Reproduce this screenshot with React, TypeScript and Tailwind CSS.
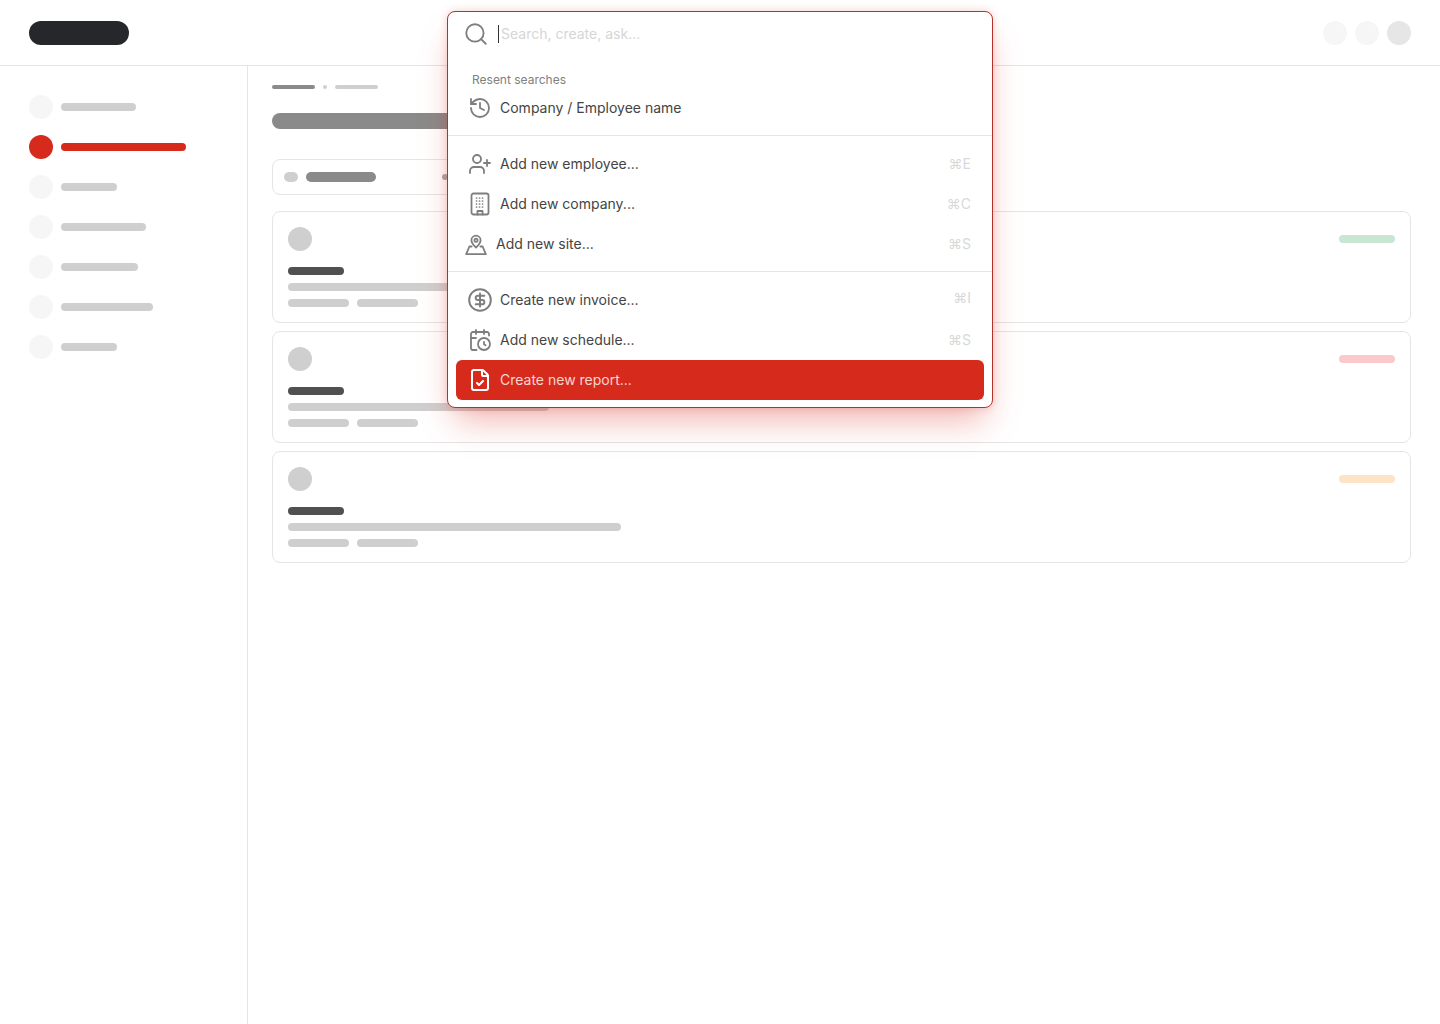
import {
  CalendarClock,
  CircleDollarSign,
  FileCheck,
  History,
  Search,
  UserPlus,
} from "lucide-react";
import type { ReactNode } from "react";

const navWidths = ["w-[75px]", "w-[125px]", "w-[56px]", "w-[85px]", "w-[77px]", "w-[92px]", "w-[56px]"];

function SiteIcon() {
  return (
    <svg viewBox="0 0 24 24" fill="none" stroke="currentColor" strokeWidth="1.8" strokeLinecap="round" strokeLinejoin="round" className="w-6 h-6">
      <path d="M12 15.5c-2.6-2.4-4.6-4.6-4.6-7.2a4.6 4.6 0 0 1 9.2 0c0 2.6-2 4.8-4.6 7.2Z" />
      <circle cx="12" cy="8.2" r="1.6" />
      <path d="M7.6 14.5H5.4L2.2 22.2h19.6l-3.2-7.7h-2.2" />
    </svg>
  );
}

function BuildingIcon() {
  return (
    <svg viewBox="0 0 24 24" fill="none" stroke="currentColor" strokeWidth="1.8" strokeLinecap="round" strokeLinejoin="round" className="w-6 h-6">
      <rect x="3.5" y="1.5" width="17" height="21" rx="2" />
      <path d="M9.5 22.5v-3.5h5v3.5" />
      <path strokeWidth="1.7" strokeDasharray="0.1 2.9" d="M8.5 6h7.1M8.5 9h7.1M8.5 12h7.1M8.5 15h7.1" />
    </svg>
  );
}

function SearchCard({ line, badge }: { line: string; badge: string }) {
  return (
    <div className="relative h-[112px] rounded-lg border border-[#e5e5e5] p-[15px]">
      <div className="w-6 h-6 rounded-full bg-[#cfcfcf]" />
      <div className="mt-4 w-14 h-2 rounded-full bg-[#505050]" />
      <div className={`mt-2 h-2 rounded-full bg-[#cfcfcf] ${line}`} />
      <div className="mt-2 flex gap-2">
        <div className="w-[61px] h-2 rounded-full bg-[#cfcfcf]" />
        <div className="w-[61px] h-2 rounded-full bg-[#cfcfcf]" />
      </div>
      <div className={`absolute right-[15px] top-[23px] w-14 h-2 rounded-full ${badge}`} />
    </div>
  );
}

function MenuRow({ icon, label, keys, keysClass, active, shift }: { icon: ReactNode; label: string; keys?: string; keysClass?: string; active?: boolean; shift?: boolean }) {
  return (
    <div className={`h-10 mx-2 rounded-md flex items-center ${active ? "bg-[#d62a1c] text-[#fbd5d0]" : "text-[#444444]"}`}>
      <div className={`flex items-center justify-center w-6 h-6 ${shift ? "ml-[8px]" : "ml-3"} ${active ? "text-white" : "text-[#7e7e7e]"}`}>
        {icon}
      </div>
      <span className="ml-2 text-sm">{label}</span>
      {keys && <span className={`ml-auto mr-[13px] text-sm text-[#d8d8d8] ${keysClass ?? ""}`}>{keys}</span>}
    </div>
  );
}

export default function App() {
  return (
    <div className="relative min-h-screen bg-white font-['Inter',sans-serif]">
      <header className="h-[66px] border-b border-[#e5e5e5] flex items-center justify-between pl-[29px] pr-[29px]">
        <div className="w-[100px] h-6 rounded-full bg-[#26272a]" />
        <div className="flex gap-2">
          <div className="w-6 h-6 rounded-full bg-[#f6f6f6]" />
          <div className="w-6 h-6 rounded-full bg-[#f6f6f6]" />
          <div className="w-6 h-6 rounded-full bg-[#e6e6e6]" />
        </div>
      </header>

      <div className="flex h-[958px]">
        <aside className="w-[248px] shrink-0 border-r border-[#e5e5e5] pt-[29px] pl-[29px] flex flex-col gap-4">
          {navWidths.map((w, i) => (
            <div key={i} className="flex items-center gap-2">
              <div className={`w-6 h-6 rounded-full ${i === 1 ? "bg-[#d62a1c]" : "bg-[#f6f6f6]"}`} />
              <div className={`h-2 rounded-full ${w} ${i === 1 ? "bg-[#d62a1c]" : "bg-[#cfcfcf]"}`} />
            </div>
          ))}
        </aside>

        <main className="flex-1 pl-6 pr-[29px] pt-[19px]">
          <div className="flex items-center gap-2">
            <div className="w-[43px] h-1 rounded-full bg-[#8a8a8a]" />
            <div className="w-1 h-1 rounded-full bg-[#cfcfcf]" />
            <div className="w-[43px] h-1 rounded-full bg-[#cfcfcf]" />
          </div>
          <div className="mt-6 w-[300px] h-4 rounded-full bg-[#8a8a8a]" />
          <div className="mt-[30px] w-[300px] h-9 rounded-lg border border-[#e5e5e5] flex items-center pl-[11px]">
            <div className="w-[14px] h-[10px] rounded-full bg-[#cfcfcf]" />
            <div className="ml-2 w-[70px] h-[10px] rounded-full bg-[#8a8a8a]" />
            <div className="ml-[66px] w-[6px] h-[6px] rounded-full bg-[#aaaaaa]" />
          </div>
          <div className="mt-4 flex flex-col gap-2">
            <SearchCard line="w-[333px]" badge="bg-[#c8e6d2]" />
            <SearchCard line="w-[261px]" badge="bg-[#fbc9c9]" />
            <SearchCard line="w-[333px]" badge="bg-[#fde3c8]" />
          </div>
        </main>
      </div>

      {/* command palette */}
      <div className="absolute left-[447px] top-[11px] w-[546px] h-[397px] rounded-lg border border-[#b5322a] bg-white shadow-[0_20px_32px_-8px_rgba(214,42,28,0.35),0_0_8px_rgba(214,42,28,0.2)]">
        <div className="h-[44px] flex items-center pl-[15px]">
          <Search className="w-[26px] h-[26px] text-[#7e7e7e]" strokeWidth={1.7} />
          <div className="ml-[9px] w-px h-[18px] bg-[#333333]" />
          <span className="ml-[2px] text-sm text-[#d6d6d6]">Search, create, ask...</span>
        </div>
        <div className="mt-4 pl-6 text-xs leading-4 text-[#808080]">Resent searches</div>
        <div className="h-10 flex items-center pl-5 text-[#444444]">
          <History className="w-6 h-6 text-[#7e7e7e]" strokeWidth={1.8} />
          <span className="ml-2 text-sm">Company / Employee name</span>
        </div>
        <div className="mt-[7px] h-px bg-[#e5e5e5]" />
        <div className="pt-2">
          <MenuRow icon={<UserPlus className="w-6 h-6" strokeWidth={1.8} />} label="Add new employee..." keys="⌘E" />
          <MenuRow icon={<BuildingIcon />} label="Add new company..." keys="⌘C" />
          <MenuRow icon={<SiteIcon />} label="Add new site..." keys="⌘S" shift />
        </div>
        <div className="mt-[7px] h-px bg-[#e5e5e5]" />
        <div className="pt-2">
          <MenuRow icon={<CircleDollarSign className="w-[26px] h-[26px] shrink-0" strokeWidth={1.8} />} label="Create new invoice..." keys="⌘I" keysClass="-mt-1" />
          <MenuRow icon={<CalendarClock className="w-6 h-6" strokeWidth={1.8} />} label="Add new schedule..." keys="⌘S" />
          <MenuRow icon={<FileCheck className="w-6 h-6" strokeWidth={2} />} label="Create new report..." active />
        </div>
      </div>
    </div>
  );
}
